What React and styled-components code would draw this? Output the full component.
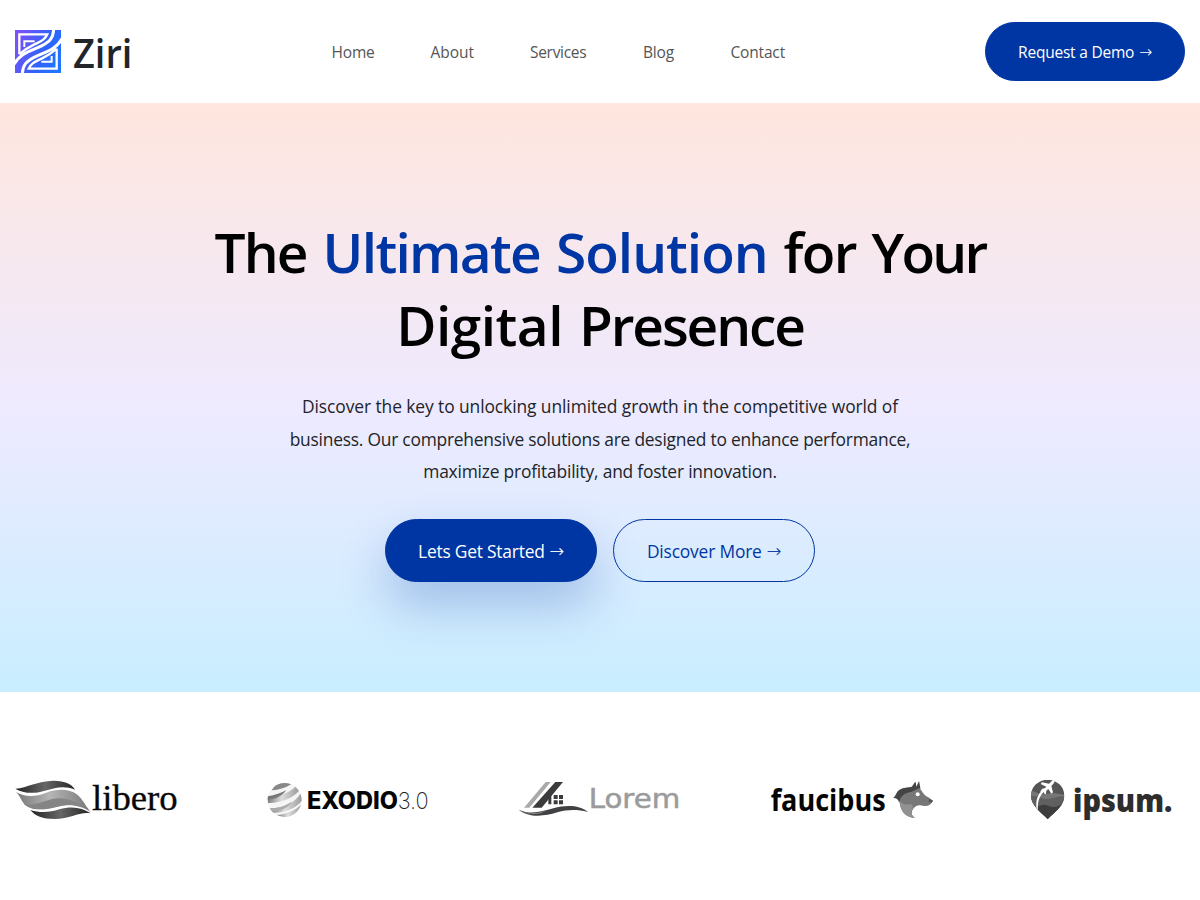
import React from "react";
import styled, { createGlobalStyle } from "styled-components";

const BLUE = "#0036a3";

const GlobalStyle = createGlobalStyle`
  * { box-sizing: border-box; }
  body {
    margin: 0;
    background: #fff;
    color: #212529;
    font-family: "Open Sans", "Noto Sans", sans-serif;
    overflow-x: hidden;
  }
`;

const Header = styled.header`
  height: 103px;
  padding: 0 15px;
  display: flex;
  align-items: center;
  justify-content: space-between;
`;

const Brand = styled.a`
  display: block;
  width: 117px;
  height: 43px;
  svg { display: block; overflow: visible; }
`;

const Nav = styled.nav`
  display: flex;
  gap: 56px;
  padding-top: 1px;
`;

const NavLink = styled.a`
  width: ${(p) => p.$width}px;
  font-size: 15.5px;
  line-height: 24px;
  letter-spacing: ${(p) => p.$track || 0}px;
  white-space: nowrap;
  color: #555;
`;

const Button = styled.a`
  display: flex;
  align-items: center;
  justify-content: center;
  width: ${(p) => p.$width}px;
  height: ${(p) => (p.$small ? 59 : 63)}px;
  padding-top: ${(p) => (p.$small ? 0 : 1)}px;
  border: 1px solid ${BLUE};
  border-radius: 32px;
  background: ${(p) => (p.$outline ? "transparent" : BLUE)};
  color: ${(p) => (p.$outline ? BLUE : "#fff")};
  font-size: ${(p) => (p.$small ? 15.5 : 17.4)}px;
  letter-spacing: ${(p) => p.$track || 0}px;
  white-space: nowrap;
  box-shadow: ${(p) => (p.$raised ? "0 24px 48px rgba(0, 54, 163, 0.25)" : "none")};
`;

const Arrow = styled.span`
  margin-left: 5px;
  font-family: "DejaVu Sans", sans-serif;
  font-weight: 200;
  font-size: 1em;
  -webkit-text-stroke: 0.2px currentColor;
`;

const Hero = styled.section`
  height: 589px;
  padding-top: 112px;
  display: flex;
  flex-direction: column;
  align-items: center;
  text-align: center;
  background: linear-gradient(180deg, #ffe6de 0%, #eeeaff 52%, #c8eeff 100%);
`;

const Title = styled.h1`
  margin: 0;
  font-size: 55px;
  line-height: 73px;
  font-weight: 600;
  color: #000;
  white-space: nowrap;
`;

const TitleLine = styled.span`
  display: block;
  word-spacing: 1.6px;
`;

const Word = styled.span`
  letter-spacing: ${(p) => p.$track}px;
`;

const Accent = styled.span`
  color: ${BLUE};
`;

const Lead = styled.p`
  margin: 29.4px 0 31.4px;
  font-size: 17.4px;
  line-height: 32.4px;
  white-space: nowrap;
`;

const LeadLine = styled.span`
  display: block;
  letter-spacing: ${(p) => p.$track}px;
`;

const Actions = styled.div`
  display: flex;
  gap: 16px;
`;

const Clients = styled.section`
  display: grid;
  grid-template-columns: 255px 250px 250px 260px 185px;
  padding: 73px 0 65px;
`;

const ClientLogo = styled.svg`
  display: block;
  width: ${(p) => p.$width}px;
  height: 70px;
`;

function ZiriLogo() {
  const half = (
    <g fill="none" stroke="#fff" strokeWidth="7">
      <path d="M161 42C160 70 148 80 126 92C98 107 62 112 42 148" strokeWidth="9" />
      <path d="M58 118V58H142C136 72 126 77 110 85C92 94 80 98 58 118" />
      <path d="M73 96V79H104" strokeWidth="6" />
    </g>
  );
  return (
    <svg width="117" height="43" viewBox="45 45 351 129">
      <defs>
        <linearGradient id="ziri" x1="0" y1="0.3" x2="1" y2="0.7">
          <stop offset="0" stopColor="#7a52f8" />
          <stop offset="0.6" stopColor="#2f62fb" />
          <stop offset="1" stopColor="#1f77ff" />
        </linearGradient>
        <clipPath id="ziriBox"><rect x="45" y="45" width="138" height="129" /></clipPath>
      </defs>
      <g clipPath="url(#ziriBox)">
        <rect x="45" y="45" width="138" height="129" fill="url(#ziri)" />
        {half}
        <g transform="rotate(180 114 109.5)">{half}</g>
      </g>
      <text x="219" y="160" fontFamily="Open Sans" fontWeight="600" fontSize="117" fill="#212529" textLength="178" lengthAdjust="spacingAndGlyphs">Ziri</text>
    </svg>
  );
}

function LiberoLogo() {
  return (
    <ClientLogo $width={200} viewBox="0 0 600 210">
      <defs>
        <linearGradient id="libMid">
          <stop offset="0" stopColor="#777" />
          <stop offset="0.45" stopColor="#b5b5b5" />
          <stop offset="1" stopColor="#777" />
        </linearGradient>
        <linearGradient id="libDark">
          <stop offset="0" stopColor="#222" />
          <stop offset="0.5" stopColor="#666" />
          <stop offset="1" stopColor="#222" />
        </linearGradient>
      </defs>
      <path d="M46 71C82 68 112 48 160 47C196 47 216 58 225 74C194 60 163 68 132 78C100 88 66 84 46 71Z" fill="url(#libDark)" />
      <path d="M48 81C74 96 103 97 139 83C179 68 218 74 237 94C253 111 260 128 273 142C239 119 206 117 169 126C130 136 91 137 72 116C61 103 61 93 48 81Z" fill="url(#libMid)" />
      <path d="M72 116C100 125 127 109 157 102C196 94 229 110 250 127C218 114 193 120 169 126C130 136 91 137 72 116Z" fill="#858585" />
      <path d="M91 135C122 145 151 142 178 133C214 122 247 127 272 145C238 139 214 161 164 162C128 162 105 153 91 135Z" fill="url(#libDark)" />
      <text x="276" y="134" fontFamily="Liberation Serif" fontSize="110" fill="#080808" stroke="#080808" strokeWidth="1" textLength="257" lengthAdjust="spacingAndGlyphs">libero</text>
    </ClientLogo>
  );
}

function ExodioLogo() {
  return (
    <ClientLogo $width={190} viewBox="0 0 570 210">
      <defs>
        <linearGradient id="exoBand">
          <stop offset="0" stopColor="#777" />
          <stop offset="0.45" stopColor="#ddd" />
          <stop offset="1" stopColor="#999" />
        </linearGradient>
        <clipPath id="exoClip"><circle cx="89" cy="105" r="51" /></clipPath>
      </defs>
      <g clipPath="url(#exoClip)">
        <rect x="36" y="52" width="106" height="106" fill="#f5f5f5" />
        <path d="M50 76C78 74 94 66 110 57L90 50L62 58Z" fill="#888" />
        <path d="M36 96C69 96 101 86 123 63L134 76C114 100 76 115 38 114Z" fill="url(#exoBand)" />
        <path d="M36 94C56 92 78 85 94 76C76 98 58 103 36 104Z" fill="#777" />
        <path d="M44 130C79 132 121 115 137 84L144 105C120 133 84 145 52 143Z" fill="url(#exoBand)" />
        <path d="M44 129C68 132 92 123 112 109C98 132 72 139 50 140Z" fill="#aaa" />
        <path d="M63 150C95 149 121 136 142 116L130 142L98 160Z" fill="url(#exoBand)" />
      </g>
      <text x="156" y="131" fontFamily="Inter" fontWeight="800" fontSize="71" fill="#050505" textLength="273" lengthAdjust="spacingAndGlyphs">EXODIO</text>
      <text x="428" y="131" fontFamily="Inter" fontWeight="200" fontSize="71" fill="#222" textLength="93" lengthAdjust="spacingAndGlyphs">3.0</text>
    </ClientLogo>
  );
}

function LoremLogo() {
  return (
    <ClientLogo $width={190} viewBox="0 0 570 210">
      <path d="M122 51H137L73 128H57Z" fill="#aaa" />
      <path d="M151 51H174L110 128H82Z" fill="#3b3b3d" />
      <path d="M124 104L139 86V118H130V101Z" fill="#3b3b3d" />
      <path d="M146 90h12v12h-12zM162 90h12v12h-12zM146 106h12v12h-12zM162 106h12v12h-12z" fill="#3b3b3d" />
      <path d="M41 134C80 151 110 139 145 130C184 119 224 120 249 141C213 132 187 134 157 142C113 156 70 157 41 134Z" fill="#414143" />
      <path d="M41 134C77 151 101 145 128 136C100 151 72 151 41 134Z" fill="#999" />
      <text x="251" y="128" fontFamily="DejaVu Sans" fontSize="80" fill="#9b9b9b" stroke="#9b9b9b" strokeWidth="1.5" textLength="275" lengthAdjust="spacingAndGlyphs">Lorem</text>
    </ClientLogo>
  );
}

function FaucibusLogo() {
  return (
    <ClientLogo $width={190} viewBox="0 0 570 210">
      <text x="47" y="139" fontFamily="Open Sans" fontWeight="700" fontSize="92" fill="#050505" textLength="345" lengthAdjust="spacingAndGlyphs">faucibus</text>
      <path d="M414 99C424 92 423 80 434 74C446 67 457 68 469 66C475 61 475 55 482 50L484 65L492 48L496 68L494 83L470 84L446 90L433 113C430 103 424 98 414 99Z" fill="#444" />
      <path d="M434 106C438 92 450 84 470 80L493 69C504 81 506 91 520 97L534 107C528 118 521 124 507 123C492 119 483 121 476 130C467 142 469 152 480 159C452 157 434 139 434 106Z" fill="#777" />
      <path d="M434 106C440 119 452 120 463 118C473 118 475 124 473 132C466 143 470 152 480 159C452 157 434 139 434 106Z" fill="#919191" />
      <circle cx="488" cy="88" r="6" fill="#fff" />
      <path d="M523 101L534 107L529 114L520 109Z" fill="#555" />
    </ClientLogo>
  );
}

function IpsumLogo() {
  return (
    <ClientLogo $width={185} viewBox="0 0 555 210">
      <defs>
        <clipPath id="pin"><path d="M98 162C77 140 48 121 48 92A50 48 0 0 1 148 92C148 121 120 140 98 162Z" /></clipPath>
      </defs>
      <g clipPath="url(#pin)">
        <rect x="46" y="42" width="106" height="122" fill="#555" />
        <path d="M46 77C68 81 69 90 88 88C110 83 118 83 150 90V166H46Z" fill="#777" />
        <path d="M46 93C75 89 77 104 101 102C124 98 128 91 152 95V166H46Z" fill="#606060" />
        <path d="M65 128C82 114 92 119 108 125C125 129 136 118 152 113V166H65Z" fill="#3d3d3d" />
        <path d="M65 134C61 108 67 87 86 72L91 77C73 91 67 109 69 136Z" fill="#fff" />
      </g>
      <path d="M75 80L82 71L89 70L94 65L77 57L81 52L102 56L111 47C117 44 121 48 117 54L109 63L114 82L109 86L100 72L94 77L93 87L89 88L86 80Z" fill="#fff" />
      <text x="174" y="140" fontFamily="Open Sans" fontWeight="800" fontSize="94" fill="#2d2d2d" textLength="298" lengthAdjust="spacingAndGlyphs">ipsum.</text>
    </ClientLogo>
  );
}

const links = [
  { label: "Home", width: 42.8, track: -0.2 },
  { label: "About", width: 43.6, track: 0 },
  { label: "Services", width: 57, track: -0.3 },
  { label: "Blog", width: 31.4, track: -0.2 },
  { label: "Contact", width: 55, track: -0.15 },
];

export default function App() {
  return (
    <>
      <GlobalStyle />
      <Header>
        <Brand><ZiriLogo /></Brand>
        <Nav>
          {links.map((l) => (
            <NavLink key={l.label} $width={l.width} $track={l.track}>{l.label}</NavLink>
          ))}
        </Nav>
        <Button $small $width={200} $track={-0.22}>Request a Demo <Arrow>→</Arrow></Button>
      </Header>
      <Hero>
        <Title>
          <TitleLine>
            <Word $track={-1.8}>The</Word>{" "}
            <Accent><Word $track={-1.7}>Ultimate</Word> <Word $track={-1}>Solution</Word></Accent>{" "}
            <Word $track={-1.7}>for</Word> <Word $track={-2.7}>Your</Word>
          </TitleLine>
          <TitleLine>
            <Word $track={-0.5}>Digital</Word> <Word $track={-2.1}>Presence</Word>
          </TitleLine>
        </Title>
        <Lead>
          <LeadLine $track={-0.08}>Discover the key to unlocking unlimited growth in the competitive world of</LeadLine>
          <LeadLine $track={-0.23}>business. Our comprehensive solutions are designed to enhance performance,</LeadLine>
          <LeadLine $track={-0.2}>maximize profitability, and foster innovation.</LeadLine>
        </Lead>
        <Actions>
          <Button $width={212} $track={-0.22} $raised>Lets Get Started <Arrow>→</Arrow></Button>
          <Button $width={202} $track={-0.18} $outline>Discover More <Arrow>→</Arrow></Button>
        </Actions>
      </Hero>
      <Clients>
        <LiberoLogo />
        <ExodioLogo />
        <LoremLogo />
        <FaucibusLogo />
        <IpsumLogo />
      </Clients>
    </>
  );
}
